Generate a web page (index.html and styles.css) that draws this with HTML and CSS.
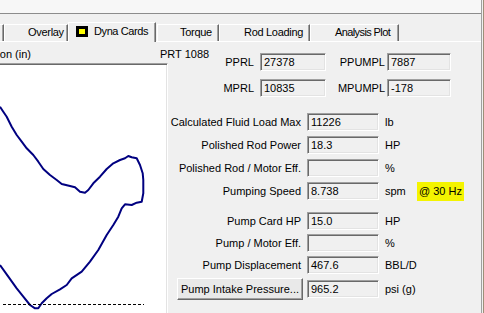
FILE: index.html
```html
<!DOCTYPE html>
<html>
  <head>
    <meta charset="UTF-8">
    <title>Dyna Cards</title>
    <link rel="stylesheet" href="styles.css">
  </head>
  <body>
    <div class="window">
      <div class="title-strip"></div>

      <div class="tabs">
        <div class="tab tab-cut"></div>
        <div class="tab tab-overlay">Overlay</div>
        <div class="tab selected"><span class="card-icon"></span>Dyna Cards</div>
        <div class="tab tab-torque">Torque</div>
        <div class="tab tab-rod">Rod Loading</div>
        <div class="tab tab-analysis">Analysis Plot</div>
      </div>

      <div class="page">
        <!-- dyna card plot, scrolled so only its right part shows -->
        <div class="plot-col">
          <div class="plot-title"><span>Polished Rod Position (in)</span></div>
          <div class="plot-box">
            <svg class="plot" width="167" height="249" viewBox="0 64 167 249">
              <polyline fill="none" stroke="#000080" stroke-width="2" stroke-linejoin="round"
                points="0,106.7 3.3,111.7 6.7,116.7 11.7,126.7 16.7,135 21.7,141.7 26.7,148.3 33.3,155 38.3,161.7 43.3,169 50,175 56.7,180 61.7,184 70,186 75,187.3 80,191.7 85,192.7 88.3,190 93.3,183.3 100,176.7 106.7,169 113.3,163.3 120,160 125,158.3 128.3,156 131.7,157.3 136.7,158.3 140,165 142.7,173.3 143.3,180 143.3,193.3 141.7,201.7 136.7,202.7 131.7,205 125,204.3 121.7,208.3 118.3,216.7 113.3,225 106.7,235 98.3,250 90,261.7 81.7,271.7 71.7,278.3 66.7,285 60,289.3 51.7,294 46.7,298.3 41.7,303.3 38.3,308.3 35,308.3 30,305 23.3,296.7 16.7,288.3 8.3,276.7 0,265"/>
              <line x1="3" y1="304.5" x2="144" y2="304.5" stroke="#000" stroke-width="1" stroke-dasharray="3 2"/>
            </svg>
          </div>
        </div>

        <div class="stats">
          <div class="loads">
            <div class="prt">PRT 1088</div>
            <div class="load-grid">
              <div class="lbl">PPRL</div>
              <div class="field">27378</div>
              <div class="lbl lbl-tight">PPUMPL</div>
              <div class="field">7887</div>

              <div class="lbl">MPRL</div>
              <div class="field">10835</div>
              <div class="lbl lbl-tight">MPUMPL</div>
              <div class="field">-178</div>
            </div>
          </div>

          <div class="calc-grid">
            <div class="lbl">Calculated Fluid Load Max</div>
            <div class="field">11226</div>
            <div class="unit">lb</div>
            <div></div>

            <div class="lbl">Polished Rod Power</div>
            <div class="field">18.3</div>
            <div class="unit">HP</div>
            <div></div>

            <div class="lbl">Polished Rod / Motor Eff.</div>
            <div class="field"></div>
            <div class="unit">%</div>
            <div></div>

            <div class="lbl">Pumping Speed</div>
            <div class="field">8.738</div>
            <div class="unit">spm</div>
            <div class="hz">@ 30 Hz</div>
          </div>

          <div class="calc-grid pump">
            <div class="lbl">Pump Card HP</div>
            <div class="field">15.0</div>
            <div class="unit">HP</div>
            <div></div>

            <div class="lbl">Pump / Motor Eff.</div>
            <div class="field"></div>
            <div class="unit">%</div>
            <div></div>

            <div class="lbl">Pump Displacement</div>
            <div class="field">467.6</div>
            <div class="unit">BBL/D</div>
            <div></div>

            <button class="pump-btn" type="button">Pump Intake Pressure...</button>
            <div class="field">965.2</div>
            <div class="unit">psi (g)</div>
            <div></div>
          </div>
        </div>
      </div>
    </div>
  </body>
</html>
```

FILE: styles.css
```css
* {
  box-sizing: border-box;
  margin: 0;
  padding: 0;
}

body {
  width: 484px;
  height: 313px;
  overflow: hidden;
  background-color: #f0f0f0;
  border-right: 1px solid #9c8f78;
  font-family: "Liberation Sans", Arial, sans-serif;
  font-size: 11px;
  line-height: 13px;
  color: #000;
}

.window {
  width: 482px;
  height: 313px;
  border-right: 1px solid #a0a0a0;
  display: flex;
  flex-direction: column;
}

.title-strip {
  height: 14px;
  background-color: #f7f7f7;
  border-bottom: 1px solid #8c8c8c;
}

/* tab strip */
.tabs {
  height: 27px;
  display: flex;
  align-items: flex-end;
}

.tab {
  height: 17px;
  padding: 1px 0 0 23px;
  background-color: #f0f0f0;
  border-top: 1px solid #fff;
  border-left: 1px solid #fff;
  border-right: 1px solid #696969;
  box-shadow: inset -1px 0 #a0a0a0;
  white-space: nowrap;
  overflow: hidden;
  letter-spacing: -0.3px;
}

.tab-cut {
  width: 4px;
  padding: 0;
  border-left: none;
}

.tab-overlay {
  width: 64px;
}

.tab-torque {
  width: 62px;
  margin-left: 1px;
  padding-left: 22px;
}

.tab-rod {
  width: 91px;
  padding-left: 24px;
}

.tab-analysis {
  width: 89px;
  padding-left: 24px;
  letter-spacing: -0.6px;
}

.tab.selected {
  position: relative;
  z-index: 1;
  width: 88px;
  height: 20px;
  margin-bottom: -1px;
  padding: 2px 0 0 7px;
  display: flex;
  align-items: flex-start;
  gap: 6px;
  letter-spacing: -0.4px;
}

.card-icon {
  flex: none;
  width: 12px;
  height: 11px;
  margin-top: 1px;
  background-color: #ffff00;
  border: 3px solid #000;
}

/* tab page */
.page {
  flex: 1;
  display: flex;
  border-top: 1px solid #fff;
}

.plot-col {
  width: 168px;
  display: flex;
  flex-direction: column;
}

.plot-title {
  width: 31px;
  height: 21px;
  padding-top: 6px;
  display: flex;
  justify-content: flex-end;
  overflow: hidden;
  white-space: nowrap;
}

.plot-box {
  flex: 1;
  background-color: #fff;
  border-top: 1px solid #a0a0a0;
  border-right: 1px solid #fff;
  box-shadow: inset 0 1px #696969, inset -1px 0 #e3e3e3;
}

.plot {
  display: block;
}

.stats {
  flex: 1;
}

.loads {
  display: flex;
  padding-top: 6px;
}

.prt {
  width: 60px;
  margin-left: -8px;
}

.load-grid {
  margin-top: 5px;
  display: grid;
  grid-template-columns: 40px 66px 61px 64px;
  grid-auto-rows: 18px;
  row-gap: 8px;
  align-items: center;
}

.lbl {
  text-align: right;
  padding-right: 6px;
  white-space: nowrap;
}

.lbl-tight {
  padding-right: 2px;
}

.field {
  height: 18px;
  padding: 2px 0 0 3px;
  background-color: #f0f0f0;
  border: 1px solid;
  border-color: #a0a0a0 #fff #fff #a0a0a0;
  box-shadow: inset 1px 1px #696969, inset -1px -1px #e3e3e3;
  white-space: nowrap;
  overflow: hidden;
}

.calc-grid {
  margin-top: 16px;
  display: grid;
  grid-template-columns: 139px 72px 38px auto;
  grid-auto-rows: 18px;
  row-gap: 5px;
  align-items: center;
}

.unit {
  padding-left: 6px;
  white-space: nowrap;
}

.hz {
  justify-self: start;
  padding: 3px 2px;
  background-color: #f4f400;
}

.pump {
  margin-top: 12px;
  row-gap: 4px;
  grid-template-rows: 18px 18px 18px 22px;
}

.pump-btn {
  justify-self: end;
  width: 126px;
  height: 22px;
  margin-right: 4px;
  font: inherit;
  color: #000;
  background-color: #e9e9e9;
  border: 1px solid;
  border-color: #fff #696969 #696969 #fff;
  box-shadow: inset -1px -1px #a0a0a0;
  white-space: nowrap;
}
```
